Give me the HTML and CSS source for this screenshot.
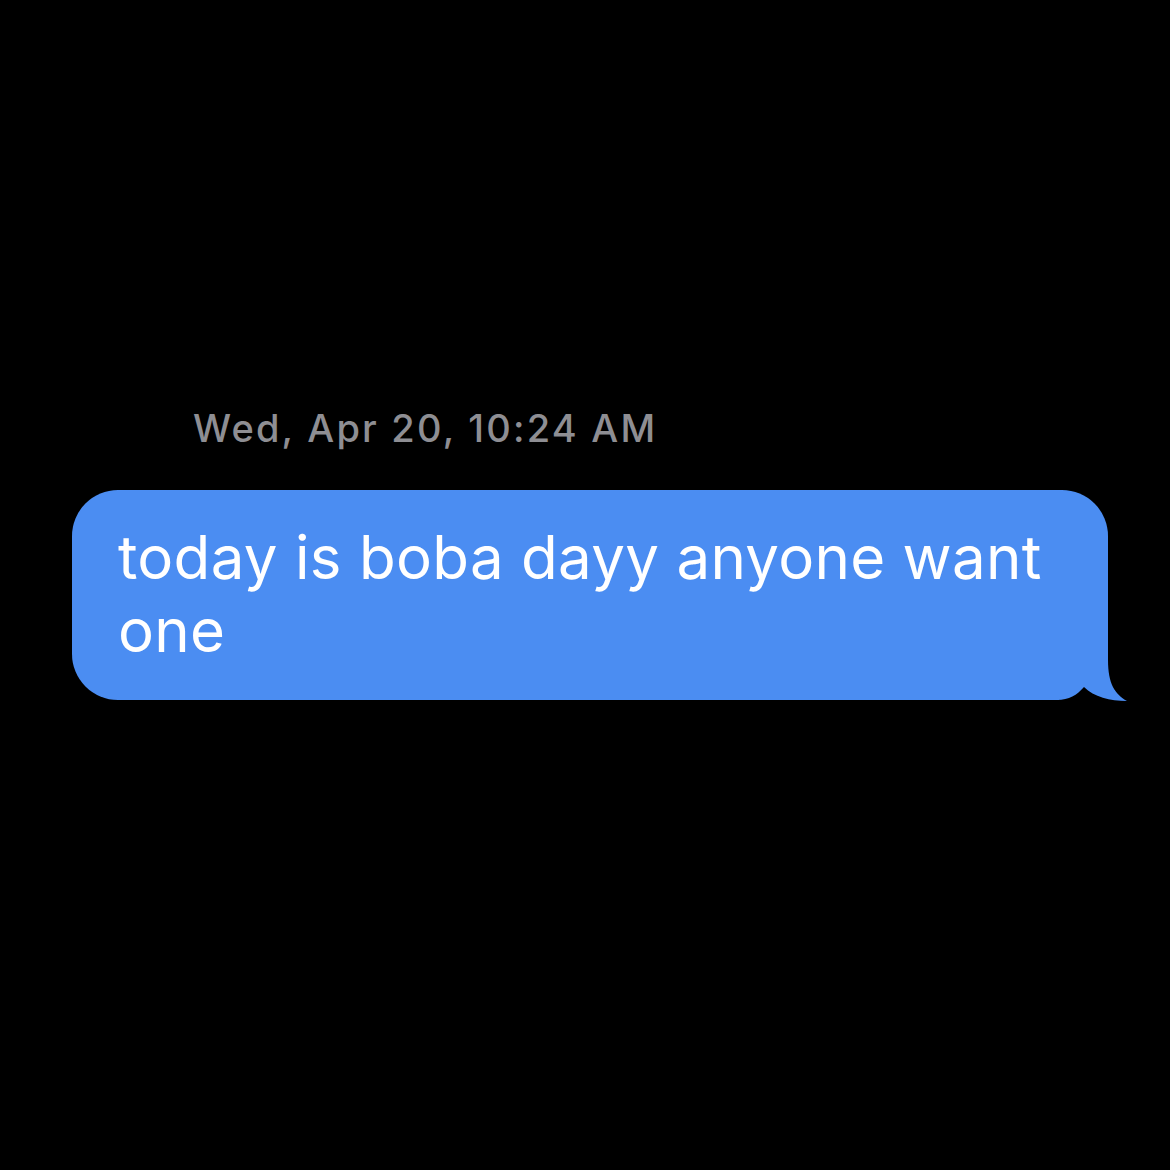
FILE: index.html
```html
<!DOCTYPE html>
<html lang="en">
<head>
    <meta charset="UTF-8">
    <meta name="viewport" content="width=device-width, initial-scale=1.0">
    <title>Messages</title>
    <link rel="stylesheet" href="styles.css">
</head>
<body>
    <div class="thread">
        <div class="stamp">Wed, Apr 20, 10:24 AM</div>
        <div class="bubble">
            today is boba dayy anyone want one
            <svg class="tail" width="80" height="62" viewBox="0 0 80 62">
                <rect x="10" y="0" width="50" height="62" fill="#000"/>
                <path d="M0 0 H59 V20 C59 44 66 54 78 61 C61 61 45 57 35 47 C28 55 20 60 8 60 H0 Z" fill="#4b8df2"/>
            </svg>
        </div>
    </div>
</body>
</html>
```

FILE: styles.css
```css
body {
    margin: 0;
    padding: 0;
    background: #000;
    font-family: Inter, "Noto Sans", sans-serif;
    width: 100%;
    height: 1170px;
}
.thread {
    padding: 406px 0 0 72px;
}
.stamp {
    color: #8e8e93;
    font-size: 38px;
    font-weight: 500;
    letter-spacing: 2.2px;
    line-height: 44px;
    padding-left: 121px;
    margin-bottom: 40px;
}
.bubble {
    position: relative;
    box-sizing: border-box;
    width: 1036px;
    height: 210px;
    padding: 31px 40px 0 46px;
    background: #4b8df2;
    color: #fff;
    font-size: 60px;
    letter-spacing: 0.3px;
    line-height: 73px;
    border-radius: 46px 46px 0 46px;
}
.tail {
    position: absolute;
    right: -21px;
    bottom: -2px;
}
```
